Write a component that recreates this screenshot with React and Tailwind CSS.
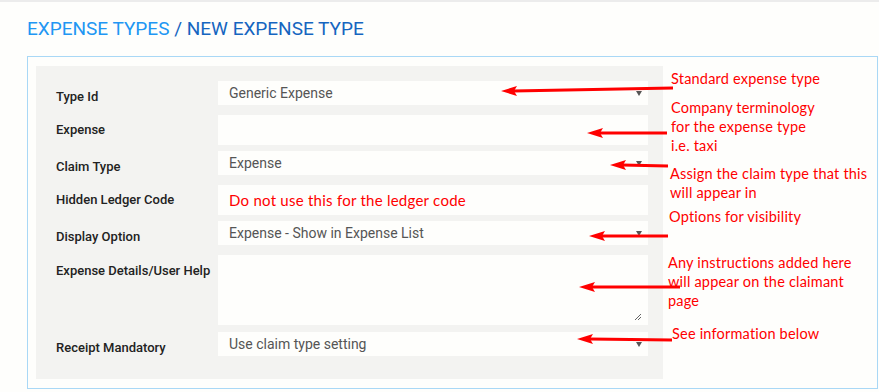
import React from "react";

const ROWS = [
  { label: "Type Id", kind: "select", value: "Generic Expense", mb: "mb-[10px]" },
  { label: "Expense", kind: "text", value: "", mb: "mb-[6px]" },
  { label: "Claim Type", kind: "select", value: "Expense", mb: "mb-[10px]" },
  { label: "Hidden Ledger Code", kind: "text", value: "Do not use this for the ledger code", red: true, mb: "mb-[6px]" },
  { label: "Display Option", kind: "select", value: "Expense - Show in Expense List", mb: "mb-[10px]" },
  { label: "Expense Details/User Help", kind: "area", value: "", mb: "mb-[7px]" },
  { label: "Receipt Mandatory", kind: "select", value: "Use claim type setting", mb: "" },
];

const NOTES = [
  { top: "top-[69px]", left: "left-[671px]", lines: ["Standard expense type"] },
  { top: "top-[98px]", left: "left-[671px]", lines: ["Company terminology", "for the expense type", "i.e. taxi"] },
  { top: "top-[164px]", left: "left-[670px]", lines: ["Assign the claim type that this", "will appear in"] },
  { top: "top-[207px]", left: "left-[669px]", lines: ["Options for visibility"] },
  { top: "top-[253px]", left: "left-[668px]", lines: ["Any instructions added here", "will appear on the claimant", "page"] },
  { top: "top-[324px]", left: "left-[672px]", lines: ["See information below"] },
];

// arrows: [tailX, tailY, tipX, tipY]
const ARROWS = [
  [673, 88, 501, 91],
  [667, 133, 587, 133],
  [668, 166, 610, 165],
  [668, 236, 589, 236],
  [680, 287, 579, 287],
  [672, 340, 577, 339],
];

function Caret() {
  return <span className="w-0 h-0 border-l-[3px] border-r-[3px] border-t-[5px] border-l-transparent border-r-transparent border-t-[#555]" />;
}

function Field({ row }) {
  if (row.kind === "area") {
    return (
      <div className="relative w-[430px] h-[70px] bg-[#fefefc]">
        <svg className="absolute right-[6px] bottom-[4px]" width="8" height="8" viewBox="0 0 8 8">
          <path d="M1 7L7 1M4 7L7 4" stroke="#666" strokeWidth="1" />
        </svg>
      </div>
    );
  }
  const h = row.kind === "text" ? "h-[30px]" : "h-[24px]";
  return (
    <div className={`${h} w-[430px] bg-[#fefefc] flex items-center justify-between pl-[11px] pr-[6px]`}>
      {row.red ? (
        <span className="text-[#f00] text-[15px] font-['Lato',sans-serif] tracking-[0.25px]">{row.value}</span>
      ) : (
        <span className="text-[#555] text-[14px]">{row.value}</span>
      )}
      {row.kind === "select" && <Caret />}
    </div>
  );
}

export default function App() {
  return (
    <div className="relative w-[879px] h-[392px] bg-[#fefefc] overflow-hidden font-['Roboto',sans-serif]">
      <div className="h-[2px] bg-[#ececec]" />
      <h1 className="mt-[14px] pl-[27px] text-[19px] leading-[26px] font-normal">
        <span className="text-[#2196f3]">EXPENSE TYPES</span>
        <span className="text-[#1565c0]"> / NEW EXPENSE TYPE</span>
      </h1>

      <div className="mt-[14px] ml-[27px] mr-[1px] h-[333px] border border-[#a9d8f6] pt-[9px] pl-[8px]">
        <div className="w-[627px] bg-[#f3f3f1] pt-[15px] pb-[23px] pl-[20px] pr-[15px]">
          {ROWS.map((row) => (
            <div key={row.label} className={`flex items-start ${row.mb}`}>
              <div
                className={`w-[162px] text-[13px] leading-[16px] font-medium text-[#222] ${
                  row.kind === "text" ? "pt-[7px]" : "pt-[8px]"
                }`}
              >
                {row.label}
              </div>
              <Field row={row} />
            </div>
          ))}
        </div>
      </div>

      <svg className="absolute inset-0 pointer-events-none" width="879" height="392">
        {ARROWS.map(([x1, y1, x2, y2], i) => (
          <g key={i}>
            <line x1={x1} y1={y1} x2={x2 + 12} y2={y2} stroke="#f00" strokeWidth="3" />
            <path d={`M${x2} ${y2} L${x2 + 16} ${y2 - 5} L${x2 + 13} ${y2} L${x2 + 16} ${y2 + 5} Z`} fill="#f00" />
          </g>
        ))}
      </svg>

      {NOTES.map((n, i) => (
        <div
          key={i}
          className={`absolute ${n.top} ${n.left} text-[#f00] text-[14.5px] leading-[19px] font-['Lato',sans-serif] tracking-[0.2px] whitespace-nowrap`}
        >
          {n.lines.map((l) => (
            <div key={l}>{l}</div>
          ))}
        </div>
      ))}
    </div>
  );
}
